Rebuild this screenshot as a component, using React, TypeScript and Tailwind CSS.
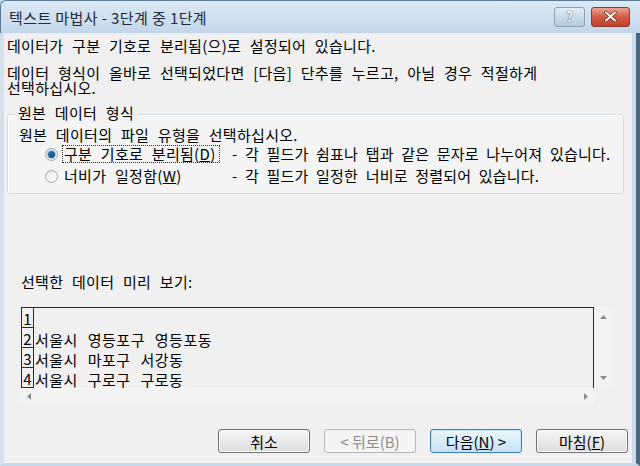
import React from 'react';

const FONT = { fontFamily: '"Noto Sans CJK KR", "Noto Sans", sans-serif' };
const TXT = 'tracking-[0.3px] [word-spacing:5px]';

function WinButton({ label, disabled, focused }: { label: React.ReactNode; disabled?: boolean; focused?: boolean }) {
  const base = 'w-[92px] h-[24px] rounded-[3px] border flex items-center justify-center text-[15px] leading-none';
  if (disabled) {
    return <div className={`${base} border-[#b5b9bc] bg-[#f4f4f4] text-[#8d8d8d]`}>{label}</div>;
  }
  if (focused) {
    return (
      <div className={`${base} border-[#3c7fb1] bg-gradient-to-b from-[#eaf6fd] to-[#c8e3f5] text-black shadow-[inset_0_0_0_1px_#bfe3f8]`}>
        {label}
      </div>
    );
  }
  return <div className={`${base} border-[#707070] bg-gradient-to-b from-[#f6f6f6] to-[#dcdcdc] text-black shadow-[inset_0_0_0_1px_#fbfbfb]`}>{label}</div>;
}

function Radio({ checked }: { checked?: boolean }) {
  return (
    <span className="w-[13px] h-[13px] rounded-full border border-[#a0a8b0] bg-gradient-to-br from-[#e8e8e8] to-[#ffffff] flex items-center justify-center shrink-0">
      {checked && <span className="w-[7px] h-[7px] rounded-full bg-gradient-to-br from-[#2a7fb8] to-[#0c4a78] shadow-[0_0_0_1px_#8cc4e8]" />}
    </span>
  );
}

const rows = ['', '서울시 영등포구 영등포동', '서울시 마포구 서강동', '서울시 구로구 구로동'];

export default function App() {
  return (
    <div className="w-[640px] h-[466px] overflow-hidden bg-[#c9dbec] flex flex-col text-black" style={FONT}>
      {/* title bar */}
      <div className="h-[33px] shrink-0 flex items-center justify-between pl-[8px] pr-[10px] bg-gradient-to-b from-[#dce9f5] to-[#c2d6ea] rounded-tl-[6px] border-t border-l border-[#5d7a95]">
        <span className="mt-[3px] text-[15px] text-[#1e2b38] tracking-[0.4px]">텍스트 마법사 - 3단계 중 1단계</span>
        <div className="flex items-center gap-[6px] pb-[1px]">
          <div className="w-[31px] h-[20px] rounded-[3px] border border-[#8aa2b8] bg-gradient-to-b from-[#e3edf6] to-[#b4cade] flex items-center justify-center text-[14px] font-bold text-[#f4f8fb] [text-shadow:0_0_1px_#3d5a78,0_0_1px_#3d5a78]">
            ?
          </div>
          <div className="w-[39px] h-[20px] rounded-[3px] border border-[#8a3a2e] bg-gradient-to-b from-[#e9a595] via-[#d05a44] to-[#c4412b] flex items-center justify-center">
            <svg width="13" height="11" viewBox="0 0 13 11">
              <path d="M2 1.5 L11 9.5 M11 1.5 L2 9.5" stroke="#6b2a20" strokeWidth="3.4" strokeLinecap="round" />
              <path d="M2 1.5 L11 9.5 M11 1.5 L2 9.5" stroke="#ffffff" strokeWidth="2" strokeLinecap="round" />
            </svg>
          </div>
        </div>
      </div>

      {/* body with frame */}
      <div className="flex-1 flex border-l-[4px] border-l-[#d3e1ef] border-r-[4px] border-r-[#4a6680] border-b-[3px] border-b-[#c7d8e9]">
        <div className="flex-1 flex flex-col bg-[#f0f0f0] border-r-[4px] border-r-[#cddcec] pl-[3px] pr-[4px] text-[15px] leading-[14px]">
          <p className={`mt-[6px] ${TXT}`}>데이터가 구분 기호로 분리됨(으)로 설정되어 있습니다.</p>
          <p className={`mt-[12px] leading-[15px] ${TXT}`}>
            데이터 형식이 올바로 선택되었다면 [다음] 단추를 누르고, 아닐 경우 적절하게
            <br />
            선택하십시오.
          </p>

          {/* group box */}
          <div className="relative mt-[19px] mr-[4px] h-[80px] border border-[#d5dde3] rounded-[3px] bg-[#f4f4f4] shadow-[inset_1px_1px_0_#ffffff]">
            <span className={`absolute -top-[9px] left-[7px] px-[3px] bg-[#f0f0f0] ${TXT}`}>원본 데이터 형식</span>
            <p className={`mt-[13px] ml-[11px] ${TXT}`}>원본 데이터의 파일 유형을 선택하십시오.</p>
            <div className="mt-[3px] ml-[37px] flex items-center">
              <Radio checked />
              <span className={`ml-[4px] w-[158px] border border-dotted border-[#333] px-[1px] py-[1px] ${TXT}`}>
                구분 기호로 분리됨(<u>D</u>)
              </span>
              <span className="ml-[12px] whitespace-nowrap tracking-[0.2px] [word-spacing:4px]">- 각 필드가 쉼표나 탭과 같은 문자로 나누어져 있습니다.</span>
            </div>
            <div className="mt-[6px] ml-[37px] flex items-center">
              <Radio />
              <span className={`ml-[4px] w-[158px] px-[2px] ${TXT}`}>
                너비가 일정함(<u>W</u>)
              </span>
              <span className="ml-[12px] whitespace-nowrap tracking-[0.2px] [word-spacing:4px]">- 각 필드가 일정한 너비로 정렬되어 있습니다.</span>
            </div>
          </div>

          <p className={`mt-[81px] ml-[14px] ${TXT}`}>선택한 데이터 미리 보기:</p>

          {/* preview */}
          <div className="mt-[18px] ml-[14px] w-[592px] flex flex-col">
            <div className="flex">
              <div className="w-[573px] h-[81px] border-t border-l border-r border-[#2b2b2b] overflow-hidden bg-[#f0f0f0]">
                {rows.map((r, i) => (
                  <div key={i} className="flex h-[20px] items-end">
                    <span className="w-[12px] h-full border-r border-b border-[#2b2b2b] flex items-end justify-center text-[15px] leading-[17px]">
                      {i + 1}
                    </span>
                    <span className="pl-[1px] text-[15px] leading-[17px] tracking-[0.5px] [word-spacing:6px] whitespace-pre">{r}</span>
                  </div>
                ))}
              </div>
              <div className="w-[18px] h-[81px] bg-[#f3f3f3] flex flex-col items-center justify-between py-[8px]">
                <svg width="7" height="4" viewBox="0 0 7 4"><path d="M0 4 L3.5 0 L7 4 Z" fill="#8a8a8a" /></svg>
                <svg width="7" height="4" viewBox="0 0 7 4"><path d="M0 0 L3.5 4 L7 0 Z" fill="#8a8a8a" /></svg>
              </div>
            </div>
            <div className="w-[573px] h-[16px] bg-[#f3f3f3] border-t border-[#fafafa] flex items-center justify-between px-[6px]">
              <svg width="4" height="7" viewBox="0 0 4 7"><path d="M4 0 L0 3.5 L4 7 Z" fill="#8a8a8a" /></svg>
              <svg width="4" height="7" viewBox="0 0 4 7"><path d="M0 0 L4 3.5 L0 7 Z" fill="#8a8a8a" /></svg>
            </div>
          </div>

          {/* buttons */}
          <div className="mt-[25px] flex justify-end gap-[14px]">
            <WinButton label="취소" />
            <WinButton label="< 뒤로(B)" disabled />
            <WinButton label={<span>다음(<u>N</u>) &gt;</span>} focused />
            <WinButton label={<span>마침(<u>F</u>)</span>} />
          </div>
        </div>
      </div>
    </div>
  );
}
